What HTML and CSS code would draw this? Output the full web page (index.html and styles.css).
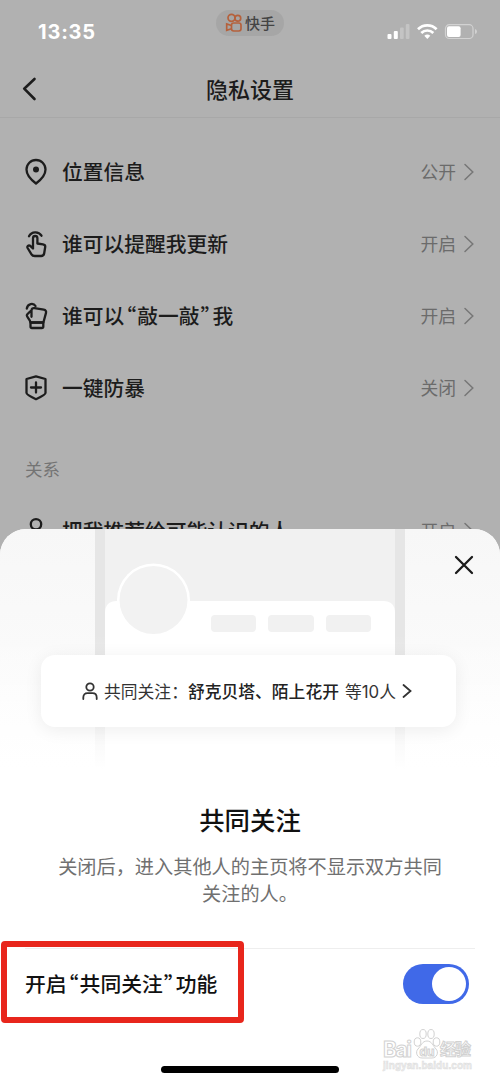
FILE: index.html
```html
<!DOCTYPE html>
<html lang="zh-CN">
<head>
<meta charset="utf-8">
<title>隐私设置</title>
<link rel="stylesheet" href="styles.css">
</head>
<body>
<div class="screen">
  <div class="status">
    <div class="time">13:35</div>
    <div class="pill">
      <svg class="pill-logo" viewBox="0 0 18 20" fill="none" stroke="#b5613c" stroke-width="1.7"><circle cx="6.500" cy="4.800" r="3.500"/><circle cx="12.800" cy="5.300" r="2.900"/><rect x="6.500" y="10" width="9.500" height="8" rx="2.200"/><path d="M6.500 12.500 1.700 11v6.300l4.800-1.500"/></svg>
      <span>快手</span>
    </div>
    <svg class="signals" viewBox="0 0 92 18">
      <rect x="0.5" y="11" width="4" height="5" rx="1" fill="#fff"/><rect x="6.8" y="8" width="4" height="8" rx="1" fill="#fff"/><rect x="13" y="4.5" width="3.7" height="11.5" rx="1" fill="#c4c4c4"/><rect x="18.8" y="1" width="3.7" height="15" rx="1" fill="#c4c4c4"/>
      <g fill="none" stroke="#fff" stroke-width="2.7"><path d="M31 6.200a13.200 13.200 0 0 1 18.600 0"/><path d="M34.300 10a8.500 8.500 0 0 1 12 0"/></g><path d="M37.300 12.800a4.400 4.400 0 0 1 6 0l-3 3.200z" fill="#fff"/>
      <rect x="58.500" y="1.700" width="27.500" height="13.800" rx="3.800" fill="none" stroke="#d2d2d2" stroke-width="1.200"/><rect x="60" y="3.200" width="13.600" height="10.800" rx="2" fill="#fff"/><path d="M88 6v5q2-.5 2-2.500T88 6z" fill="#d2d2d2"/>
    </svg>
  </div>
  <header class="nav">
    <svg class="back" viewBox="0 0 16 24"><path d="M13.500 2 3.200 11.700 13.500 22" fill="none" stroke="#1c1c1c" stroke-width="2.600" stroke-linecap="round" stroke-linejoin="round"/></svg>
    <h1 class="nav-title">隐私设置</h1>
  </header>
  <main class="list">
    <div class="row">
      <svg class="icon" viewBox="0 0 26 30"><path d="M13 26.500C9 23.500 3.500 18.800 3.500 12.500a9.500 9.500 0 0 1 19 0c0 6.300-5.500 11-9.500 14z"/><circle cx="13" cy="12.600" r="3" class="solid"/></svg>
      <span class="label">位置信息</span><span class="value">公开</span><svg class="chev" viewBox="0 0 12 18"><path d="M2 1.500 9.800 9 2 16.500"/></svg>
    </div>
    <div class="row">
      <svg class="icon" viewBox="0 0 26 30"><path d="M6 7.200a7.200 7.200 0 0 1 12.500-.5"/><path d="M10 19V9.200a2.200 2.200 0 0 1 4.400 0v5.300l5.600.8c1.800.3 2.400 1.300 2.200 2.700l-1 6.200c-.3 2-1.200 2.800-3 2.800h-6.400c-1.700 0-2.600-.5-3.300-1.700L4.600 19c-.8-1.500.9-3.200 2.600-2.200L10 19.500"/></svg>
      <span class="label">谁可以提醒我更新</span><span class="value">开启</span><svg class="chev" viewBox="0 0 12 18"><path d="M2 1.500 9.800 9 2 16.500"/></svg>
    </div>
    <div class="row">
      <svg class="icon" viewBox="0 0 26 30"><path d="M3.800 7.500C4.500 2.300 10.500 1.600 12.500 5"/><path d="M8.500 15.800V9.500c0-2 1.300-2.600 3-2.300l9.300 1.500c1.900.3 2.600 1.500 2.200 3.200l-2.600 9.600H7.500c-.5-3.500-3.700-5-3.700-7.200 0-1.300 2-2.400 4.200-4.600"/><path d="M7.500 21.500h12.800v4q0 1.500-1.500 1.500H9q-1.500 0-1.500-1.500z"/></svg>
      <span class="label">谁可以<span class="quote">“</span>敲一敲<span class="quote">”</span>我</span><span class="value">开启</span><svg class="chev" viewBox="0 0 12 18"><path d="M2 1.500 9.800 9 2 16.500"/></svg>
    </div>
    <div class="row">
      <svg class="icon" viewBox="0 0 26 30"><path d="M13 3.300 22.500 6v14c0 1.500-5 4-9.500 6.200C8.500 24 3.500 21.500 3.500 20V6z"/><path d="M13 9.500v10M8 14.500h10"/></svg>
      <span class="label">一键防暴</span><span class="value">关闭</span><svg class="chev" viewBox="0 0 12 18"><path d="M2 1.500 9.800 9 2 16.500"/></svg>
    </div>
    <h2 class="section">关系</h2>
    <div class="row">
      <svg class="icon" viewBox="0 0 26 30"><circle cx="13" cy="8.300" r="5.200"/><path d="M4 26v-3q0-6 6-6h6q6 0 6 6v3"/></svg>
      <span class="label">把我推荐给可能认识的人</span><span class="value">开启</span><svg class="chev" viewBox="0 0 12 18"><path d="M2 1.500 9.800 9 2 16.500"/></svg>
    </div>
  </main>

  <section class="sheet">
    <div class="preview">
      <svg class="phone" viewBox="0 0 500 240">
        <defs>
          <linearGradient id="base" x2="0" y2="1"><stop stop-color="#fff" stop-opacity="0"/><stop offset="1" stop-color="#fff"/></linearGradient>
          <linearGradient id="side" x2="0" y2="1"><stop stop-color="#f7f7f7"/><stop offset="1" stop-color="#fdfdfd"/></linearGradient>
        </defs>
        <rect width="500" height="240" fill="url(#side)"/>
        <rect x="95" width="310" height="240" fill="#e6e6e6"/>
        <rect x="105" width="290" height="240" fill="#f1f1f1"/>
        <path d="M105 240V84q0-12 12-12h266q12 0 12 12v156z" fill="#fff"/>
        <circle cx="153.500" cy="71" r="36.500" fill="#fff"/>
        <circle cx="153.500" cy="71" r="34" fill="#f2f2f2"/>
        <g fill="#f1f1f1"><rect x="211" y="86" width="45" height="17" rx="4"/><rect x="268" y="86" width="46" height="17" rx="4"/><rect x="326" y="86" width="45" height="17" rx="4"/></g>
        <rect y="105" width="500" height="135" fill="url(#base)"/>
      </svg>
      <svg class="close" viewBox="0 0 20 20"><path d="m2 2 16 16M18 2 2 18" stroke="#1b1b1b" stroke-width="2.300" stroke-linecap="round"/></svg>
      <div class="card">
        <svg class="person" viewBox="0 0 16 18"><circle cx="8" cy="5" r="3.700"/><path d="M1.300 17v-1.500q0-4.300 4.300-4.300h4.800q4.300 0 4.300 4.300V17"/></svg>
        <span>共同关注：</span><span class="names">舒克贝塔、陌上花开</span><span class="count">等<span class="digits">10</span>人</span>
        <svg class="more" viewBox="0 0 10 16"><path d="m1.500 2 7 6-7 6"/></svg>
      </div>
    </div>
    <h2 class="sheet-title">共同关注</h2>
    <p class="desc">关闭后，进入其他人的主页将不显示双方共同<br>关注的人。</p>
    <div class="setting">
      <span class="setting-label">开启<span class="quote">“</span>共同关注<span class="quote">”</span>功能</span>
      <span class="switch"><span class="knob"></span></span>
    </div>
    <div class="home"></div>
  </section>
  <div class="highlight"></div>
  <svg class="watermark" viewBox="0 0 96 46">
    <text x="1" y="30" class="wm-latin" textLength="29">Bai</text>
    <g class="paw"><ellipse cx="35.500" cy="15" rx="3.300" ry="4.200"/><ellipse cx="41" cy="7" rx="3.200" ry="4.500"/><ellipse cx="49" cy="7" rx="3.200" ry="4.500"/><ellipse cx="54.500" cy="15" rx="3.300" ry="4.200"/><path d="M45 14c5 0 6 5 9 8s1 9-4 9H40c-5 0-7-6-4-9s4-8 9-8z"/></g>
    <text x="37.500" y="28.500" class="wm-du">du</text>
    <text x="58" y="28" class="wm-cn" textLength="31">经验</text>
    <text x="1" y="42" class="wm-url" textLength="89">jingyan.baidu.com</text>
  </svg>
</div>
</body>
</html>
```

FILE: styles.css
```css
* { box-sizing: border-box; }
body { margin: 0; }
h1, h2, p { margin: 0; }
svg { display: block; flex: none; }

.screen {
  position: relative;
  width: 500px;
  height: 1083px;
  overflow: hidden;
  background: #b1b1b1;
  color: #1c1c1c;
  font-family: "Noto Sans CJK SC", sans-serif;
}

.status {
  display: grid;
  grid-template-columns: 216px 68px 1fr;
  height: 62px;
}
.time {
  padding: 20px 0 0 38px;
  font: 700 20px/24px Inter, sans-serif;
  letter-spacing: .8px;
  color: #fff;
}
.pill {
  display: flex;
  align-items: center;
  gap: 2px;
  height: 26px;
  margin-top: 10px;
  padding-left: 9px;
  border-radius: 13px;
  background: #a6a6a6;
  color: #444;
  font-size: 15px;
  font-weight: 500;
  line-height: 26px;
}
.pill-logo { width: 18px; height: 20px; }
.signals { width: 92px; height: 18px; margin: 23px 0 0 103px; }

.nav {
  display: grid;
  grid-template-columns: 100px 1fr 100px;
  align-items: center;
  height: 56px;
  border-bottom: 1px solid #a8a8a8;
}
.back { width: 16px; height: 24px; margin: -2px 0 0 21px; }
.nav-title {
  padding-bottom: 4px;
  font-size: 22px;
  font-weight: 500;
  line-height: 32px;
  text-align: center;
}

.list { padding: 18px 25px 0 23px; }
.row { display: flex; align-items: center; height: 72px; }
.icon {
  width: 26px;
  height: 30px;
  margin-right: 13px;
  fill: none;
  stroke: #1c1c1c;
  stroke-width: 2.3;
  stroke-linecap: round;
  stroke-linejoin: round;
}
.icon .solid { fill: #1c1c1c; stroke: none; }
.label {
  flex: 1;
  padding-bottom: 2px;
  font-size: 20.75px;
  font-weight: 500;
  line-height: 30px;
  white-space: nowrap;
}
.quote {
  display: inline-block;
  width: 13px;
  font-feature-settings: "palt";
  text-align: center;
}
.value { margin-right: 7px; padding-bottom: 1px; color: #6b6b6b; font-size: 17.8px; line-height: 27px; }
.chev {
  width: 12px;
  height: 18px;
  fill: none;
  stroke: #777;
  stroke-width: 1.5;
  stroke-linecap: round;
}
.section {
  height: 71px;
  padding: 31px 0 0 2px;
  color: #747474;
  font-size: 17.5px;
  font-weight: 400;
  line-height: 28px;
}

.sheet {
  position: absolute;
  inset: 529px 0 0;
  display: flex;
  flex-direction: column;
  overflow: hidden;
  border-radius: 26px 26px 0 0;
  background: #fff;
}
.preview { position: relative; height: 240px; padding: 126px 44px 0 41px; }
.phone { position: absolute; inset: 0; width: 500px; height: 240px; }
.close { position: absolute; top: 26px; right: 26px; width: 20px; height: 20px; }
.card {
  position: relative;
  display: flex;
  align-items: center;
  height: 72px;
  padding-left: 41px;
  border-radius: 14px;
  background: #fff;
  box-shadow: 0 3px 18px rgba(0, 0, 0, .07);
  color: #333;
  font-size: 16.8px;
  white-space: nowrap;
}
.person, .more { fill: none; stroke: #333; stroke-width: 1.8; stroke-linecap: round; }
.person { width: 16px; height: 18px; margin-right: 6px; }
.names { font-weight: 500; color: #222; }
.count { margin-left: 6px; }
.digits { font-family: Inter, sans-serif; }
.more { width: 10px; height: 16px; margin-left: 6px; }
.sheet-title {
  margin-top: 31px;
  color: #111;
  font-size: 25.4px;
  font-weight: 500;
  line-height: 38px;
  text-align: center;
}
.desc {
  margin-top: 15px;
  color: #707070;
  font-size: 19.2px;
  line-height: 27px;
  text-align: center;
}
.setting {
  display: flex;
  align-items: center;
  justify-content: space-between;
  height: 71px;
  margin: 41px 25px 0;
  padding-right: 6px;
  border-top: 1px solid #eee;
}
.setting-label {
  padding-bottom: 2px;
  color: #111;
  font-size: 20.8px;
  font-weight: 500;
  line-height: 30px;
}
.switch {
  display: flex;
  justify-content: flex-end;
  width: 66px;
  height: 40px;
  padding: 3px;
  border-radius: 20px;
  background: #4069e8;
}
.knob { width: 34px; height: 34px; border-radius: 50%; background: #fff; }
.home { width: 178px; height: 7px; margin: 47px 0 0 161px; border-radius: 4px; background: #000; }

.highlight {
  position: absolute;
  top: 941px;
  left: 1px;
  width: 243px;
  height: 82px;
  border: 6px solid #e8261c;
  border-radius: 4px;
}
.watermark { position: absolute; top: 1027px; left: 382px; width: 96px; height: 46px; overflow: visible; }
.watermark text, .paw { fill: #fff; stroke: #d2d2d2; stroke-width: 1; }
.wm-latin { font: 700 21px Inter, sans-serif; }
.wm-du { font: 700 12px Inter, sans-serif; }
.wm-cn { font: 700 16px "Noto Sans CJK SC", sans-serif; }
.watermark .wm-url { font: 700 10px "Liberation Sans", sans-serif; fill: #eee; stroke: #ddd; stroke-width: .5; }
```
